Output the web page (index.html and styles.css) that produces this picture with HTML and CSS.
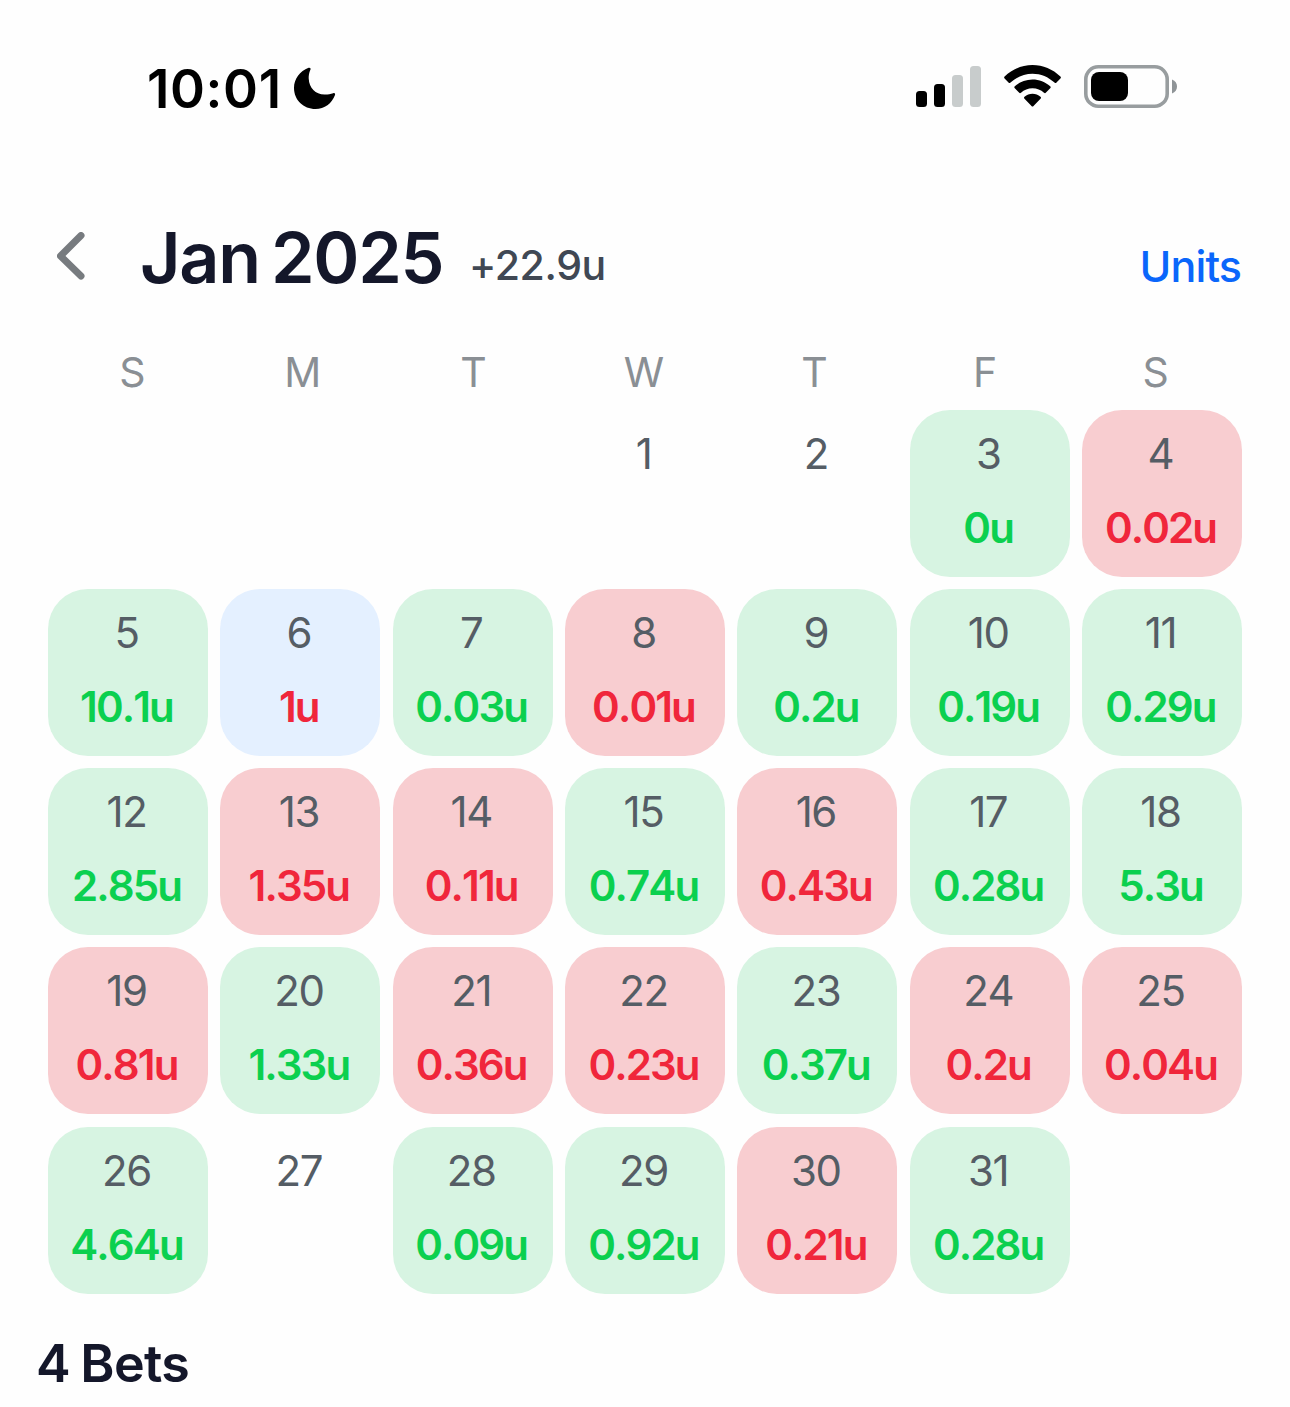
FILE: index.html
```html
<!DOCTYPE html>
<html lang="en">
<head>
  <meta charset="UTF-8" />
  <meta name="viewport" content="width=device-width, initial-scale=1.0" />
  <title>Jan 2025</title>
  <link rel="stylesheet" href="styles.css">
</head>
<body>
  <div class="status-bar">
    <span class="time">10:01</span>
    <svg class="moon" width="42" height="42" viewBox="0 0 42 42"><path d="M14.6.8C15.8.3 17 1.100 16.500 2.400C14.900 6 14.600 9 14.700 11.500C15.100 21 21.500 27.300 30.500 27.600C33.500 27.700 36.500 27.200 39.200 26.200C40.600 25.700 41.500 26.700 41 28C37.800 36.500 30.600 42 21.500 42C9.500 42 0 33 0 21C0 11.800 5.800 4.100 14.600.8Z"/></svg>
    <div class="status-icons">
      <svg width="65" height="42" viewBox="0 0 65 42">
        <rect x="0" y="26" width="11" height="16" rx="3.500"/>
        <rect x="18" y="19" width="11" height="23" rx="3.500"/>
        <rect class="dim" x="36" y="10" width="11" height="32" rx="3.500"/>
        <rect class="dim" x="54" y="1" width="11" height="41" rx="3.500"/>
      </svg>
      <svg width="57" height="42" viewBox="0 0 57 42">
        <path d="M28.500 0C39 0 48.800 4.200 56.400 11.500Q57.400 12.500 56.400 13.500L52.500 17.600Q51.500 18.600 50.500 17.600C44.500 12 36.800 8.700 28.500 8.700C20.200 8.700 12.500 12 6.500 17.600Q5.500 18.600 4.500 17.600L.6 13.500Q-.4 12.500.6 11.500C8.200 4.200 18 0 28.500 0Z"/>
        <path d="M28.500 14.500C35.200 14.500 41.300 16.900 46.200 21.300Q47.200 22.300 46.200 23.300L42 27.600Q41 28.600 40 27.700C36.900 24.900 32.900 23.200 28.500 23.200C24.100 23.200 20.100 24.900 17 27.700Q16 28.600 15 27.600L10.800 23.300Q9.800 22.300 10.800 21.300C15.700 16.900 21.800 14.500 28.500 14.500Z"/>
        <path d="M28.500 28.700C31.500 28.700 34.200 29.700 36.500 31.700Q37.500 32.700 36.500 33.700L29.500 41.100Q28.500 42.100 27.500 41.100L20.500 33.700Q19.500 32.700 20.500 31.700C22.800 29.700 25.500 28.700 28.500 28.700Z"/>
      </svg>
      <svg width="94" height="43" viewBox="0 0 94 43">
        <rect class="shell" x="1.800" y="1.800" width="81.400" height="39.400" rx="12.500"/>
        <rect x="7" y="7" width="37" height="29" rx="8"/>
        <path class="tip" d="M88 14.500C91.300 15.800 93 18.300 93 21.500C93 24.700 91.300 27.200 88 28.500Z"/>
      </svg>
    </div>
  </div>

  <header class="month-bar">
    <svg class="back" width="28" height="48" viewBox="0 0 28 48"><path d="M24 3.500L3.500 24L24 44"/></svg>
    <h1>Jan 2025</h1>
    <span class="total">+22.9u</span>
    <a class="units">Units</a>
  </header>

  <div class="weekdays">
    <span>S</span><span>M</span><span>T</span><span>W</span><span>T</span><span>F</span><span>S</span>
  </div>

  <div class="calendar">
    <div class="day first">1</div>
    <div class="day">2</div>
    <div class="day win">3<b>0u</b></div>
    <div class="day loss">4<b>0.02u</b></div>

    <div class="day win">5<b>10.1u</b></div>
    <div class="day loss selected">6<b>1u</b></div>
    <div class="day win">7<b>0.03u</b></div>
    <div class="day loss">8<b>0.01u</b></div>
    <div class="day win">9<b>0.2u</b></div>
    <div class="day win">10<b>0.19u</b></div>
    <div class="day win">11<b>0.29u</b></div>

    <div class="day win">12<b>2.85u</b></div>
    <div class="day loss">13<b>1.35u</b></div>
    <div class="day loss">14<b>0.11u</b></div>
    <div class="day win">15<b>0.74u</b></div>
    <div class="day loss">16<b>0.43u</b></div>
    <div class="day win">17<b>0.28u</b></div>
    <div class="day win">18<b>5.3u</b></div>

    <div class="day loss">19<b>0.81u</b></div>
    <div class="day win">20<b>1.33u</b></div>
    <div class="day loss">21<b>0.36u</b></div>
    <div class="day loss">22<b>0.23u</b></div>
    <div class="day win">23<b>0.37u</b></div>
    <div class="day loss">24<b>0.2u</b></div>
    <div class="day loss">25<b>0.04u</b></div>

    <div class="day win">26<b>4.64u</b></div>
    <div class="day">27</div>
    <div class="day win">28<b>0.09u</b></div>
    <div class="day win">29<b>0.92u</b></div>
    <div class="day loss">30<b>0.21u</b></div>
    <div class="day win">31<b>0.28u</b></div>
  </div>

  <h2>4 Bets</h2>
</body>
</html>
```
FILE: styles.css
```css
:root{--ink:#14172a;--green:#0bd04f;--red:#f0263b}
*,*::before,*::after{box-sizing:border-box;margin:0;padding:0}
body{font-family:Inter,"Liberation Sans",sans-serif;background:#fefefe;color:var(--ink);width:1290px;height:1407px;overflow:hidden}
svg{display:block;flex:none}

.status-bar{display:flex;align-items:flex-start;height:222px;padding:65px 112px 0 147px;color:#000}
.time{font-size:53px;font-weight:600;line-height:48px;letter-spacing:.6px;width:147px;white-space:nowrap}
.moon{margin-top:2px}
.status-icons{display:flex;gap:23px;margin-left:auto}
.dim{fill:#c8cccc}
.shell{fill:none;stroke:#989d9f;stroke-width:3.6}
.tip{fill:#8f9497}

.month-bar{display:flex;align-items:flex-start;height:124px;padding:0 49px 0 57px}
.back{margin-top:10px}
.back path{fill:none;stroke:#777b7f;stroke-width:7;stroke-linecap:round;stroke-linejoin:round}
h1{font-size:70px;font-weight:600;line-height:70px;margin:1px 0 0 55px;width:329px;letter-spacing:-1.3px;word-spacing:-5px;white-space:nowrap}
.total{font-size:41px;font-weight:500;line-height:50px;margin-top:18px;letter-spacing:-.4px;color:#404854}
.units{font-size:43px;font-weight:500;line-height:50px;margin:19px 0 0 auto;letter-spacing:-.9px;color:#0a66fb}

.weekdays{display:grid;grid-template-columns:repeat(7,1fr);width:1194px;height:64px;margin-left:47px;font-size:41px;line-height:52px;color:#8a8f94;text-align:center}

.calendar{display:grid;grid-template-columns:repeat(7,1fr);grid-auto-rows:167px;gap:12.15px 12.3px;margin:0 48px}
.day{border-radius:40px;padding-top:19px;font-size:42px;line-height:50px;text-align:center;text-indent:-3px;color:#555d65;letter-spacing:-1.4px;font-kerning:none}
.day b{display:block;margin-top:24px;font-weight:600;letter-spacing:-1.9px;text-indent:-3px}
.first{grid-column-start:4}
.win{background:#d7f4e2}
.win b{color:var(--green)}
.loss{background:#f8cdd0}
.loss b{color:var(--red)}
.selected{background:#e4f0ff}

h2{font-size:52px;font-weight:600;line-height:60px;margin:40px 0 0 36px;letter-spacing:-.7px;word-spacing:-2px}
```
